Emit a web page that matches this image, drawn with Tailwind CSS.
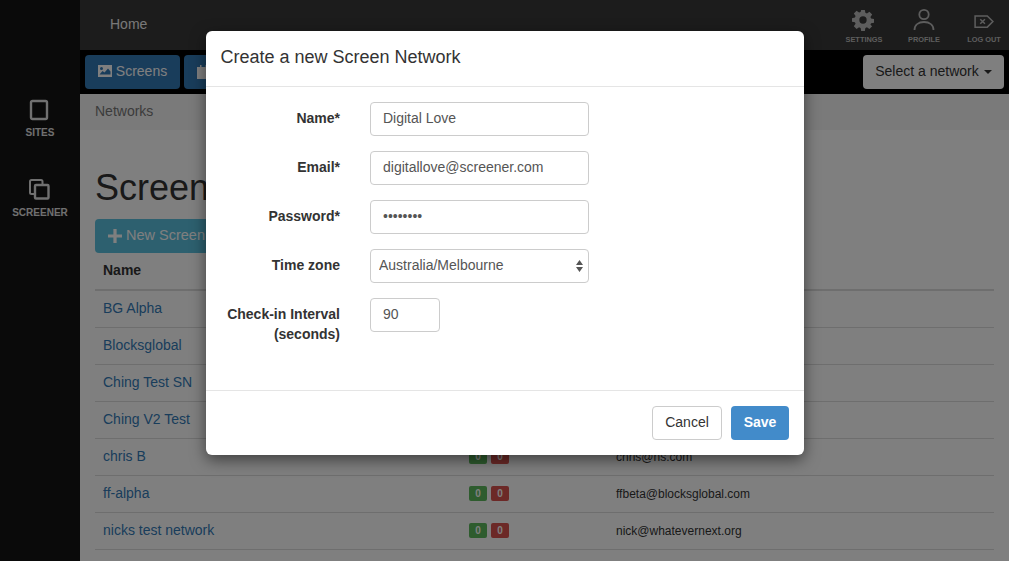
<!DOCTYPE html>
<html lang="en">
<head>
<meta charset="UTF-8">
<title>Create a new Screen Network</title>
<script src="https://cdn.jsdelivr.net/npm/@tailwindcss/browser@4"></script>
</head>
<body class="relative flex h-[561px] overflow-hidden bg-white font-['Liberation_Sans',Arial,sans-serif] text-[14px] text-[#333]">

  <!-- Sidebar -->
  <aside class="w-20 shrink-0 bg-[#141414] pt-[99px] flex flex-col items-center text-[#e0e0e0]">
    <div class="flex flex-col items-center">
      <svg class="-ml-[2px]" width="20" height="22" viewBox="0 0 20 22" fill="none" stroke="currentColor" stroke-width="2.4"><rect x="2" y="2" width="16" height="18" rx="1.5"/></svg>
      <span class="mt-[5px] text-[10px] leading-[14px] font-bold">SITES</span>
    </div>
    <div class="flex flex-col items-center mt-[38px]">
      <svg class="-ml-[2px]" width="22" height="22" viewBox="0 0 22 22" fill="none" stroke="currentColor" stroke-width="2"><path d="M6 16H3.5A1.5 1.5 0 0 1 2 14.500V3.500A1.500 1.500 0 0 1 3.500 2H13a1.500 1.500 0 0 1 1.500 1.500V6"/><rect x="7" y="7" width="13.500" height="13.500" rx="1" stroke-width="2.400"/></svg>
      <span class="mt-[6px] text-[10px] leading-[14px] font-bold">SCREENER</span>
    </div>
  </aside>

  <!-- Main -->
  <div class="flex-1 min-w-0 flex flex-col">
    <header class="h-[50px] bg-[#383838] flex items-center text-[#f0f0f0]">
      <span class="ml-[30px] pb-[2px]">Home</span>
      <div class="ml-auto -mr-[5px] flex items-start h-full text-[#bbb]">
        <div class="w-[60px] flex flex-col items-center pt-[9px]">
          <svg class="-ml-[2px]" width="22" height="22" viewBox="0 0 24 24" fill="currentColor"><path fill-rule="evenodd" d="M10 1h4l.6 3.200 1.700.7L19 3l3 3-1.900 2.700.7 1.700 3.200.6v4l-3.200.6-.7 1.700L22 18.900l-3 3-2.700-1.900-1.700.7-.6 3.300h-4l-.6-3.300-1.700-.7L5 21.900l-3-3 1.900-2.700-.7-1.700L0 14v-4l3.200-.6.7-1.700L2 5l3-3 2.700 1.900 1.700-.7zM12 8a4 4 0 1 0 0 8 4 4 0 0 0 0-8z"/></svg>
          <span class="mt-[4px] text-[7.4px] leading-[10px] font-bold">SETTINGS</span>
        </div>
        <div class="w-[60px] flex flex-col items-center pt-[8px]">
          <svg width="22" height="23" viewBox="0 0 22 23" fill="none" stroke="currentColor" stroke-width="1.800"><circle cx="11" cy="6.500" r="4.700"/><path d="M1.500 22c0-5 4-8 9.500-8s9.500 3 9.500 8"/></svg>
          <span class="mt-[4px] text-[7.4px] leading-[10px] font-bold">PROFILE</span>
        </div>
        <div class="w-[60px] flex flex-col items-center pt-[14px]">
          <svg width="20" height="15" viewBox="0 0 21 16" fill="none" stroke="currentColor" stroke-width="1.600"><path d="M1 2h13l6 6-6 6H1z"/><path d="M6.500 5.500l5 5M11.500 5.500l-5 5"/></svg>
          <span class="mt-[6px] text-[7.4px] leading-[10px] font-bold">LOG OUT</span>
        </div>
      </div>
    </header>

    <nav class="h-[44px] bg-black flex items-center pl-[5px] pr-[5px] gap-1">
      <span class="h-[34px] w-[95px] pb-[2px] rounded-[4px] bg-[#337ab7] text-white flex items-center justify-center gap-[4px]">
        <svg width="14" height="12" viewBox="0 0 14 12" fill="currentColor"><path fill-rule="evenodd" d="M0 0h14v12H0zM1.500 9.500h11V6.500L10 3.500 6.500 7.500 4.500 6zM3.500 2a1.500 1.500 0 1 0 0 3 1.500 1.500 0 0 0 0-3z"/></svg>
        Screens
      </span>
      <span class="h-[34px] w-[95px] rounded-[4px] bg-[#337ab7] text-white flex items-center pl-[13px]">
        <svg width="13" height="14" viewBox="0 0 13 14" fill="currentColor"><path d="M0 2h13v12H0zM3 0h1.500v3H3zM8.500 0H10v3H8.500z"/></svg>
      </span>
      <span class="ml-auto h-[34px] w-[141px] pb-[2px] rounded-[4px] bg-white text-[#333] flex items-center justify-center gap-[5px]">
        Select a network
        <span class="w-0 h-0 mt-[2px] border-x-[4px] border-x-transparent border-t-[4px] border-t-[#333]"></span>
      </span>
    </nav>

    <div class="h-[36px] pb-[2px] bg-[#f5f5f5] flex items-center pl-[15px] text-[#777]">Networks</div>

    <main class="px-[15px]">
      <h1 class="mt-[38px] text-[36px] leading-[40px] text-[#333]">Screen Networks</h1>
      <button class="mt-[11px] h-[34px] w-[180px] pb-[1px] rounded-[4px] bg-[#5bc0de] text-white flex items-center pl-[13px] gap-[4px] text-[14.500px] whitespace-nowrap">
        <svg class="shrink-0" width="14" height="14" viewBox="0 0 13 13" fill="currentColor"><path d="M5 0h3v5h5v3H8v5H5V8H0V5h5z"/></svg>
        New Screen Network
      </button>
      <table class="w-full border-collapse text-left">
        <thead>
          <tr class="h-[37px] border-b-2 border-[#ddd]"><th class="pl-2 pb-[2px] font-bold">Name</th><th class="w-[147px]"></th><th class="w-[378px]"></th></tr>
        </thead>
        <tbody class="text-[#337ab7]">
          <tr class="h-[37px] border-b border-[#ddd]"><td class="pl-2">BG Alpha</td><td></td><td></td></tr>
          <tr class="h-[37px] border-b border-[#ddd]"><td class="pl-2">Blocksglobal</td><td></td><td></td></tr>
          <tr class="h-[37px] border-b border-[#ddd]"><td class="pl-2">Ching Test SN</td><td></td><td></td></tr>
          <tr class="h-[37px] border-b border-[#ddd]"><td class="pl-2">Ching V2 Test</td><td></td><td></td></tr>
          <tr class="h-[37px] border-b border-[#ddd]"><td class="pl-2">chris B</td>
            <td><div class="flex gap-1"><span class="w-[18px] h-[15px] rounded-[2px] bg-[#5cb85c] text-white text-[10px] font-bold leading-[15px] text-center">0</span><span class="w-[18px] h-[15px] rounded-[2px] bg-[#d9534f] text-white text-[10px] font-bold leading-[15px] text-center">0</span></div></td>
            <td class="text-[12px] text-[#333]">chris@ns.com</td></tr>
          <tr class="h-[37px] border-b border-[#ddd]"><td class="pl-2">ff-alpha</td>
            <td><div class="flex gap-1"><span class="w-[18px] h-[15px] rounded-[2px] bg-[#5cb85c] text-white text-[10px] font-bold leading-[15px] text-center">0</span><span class="w-[18px] h-[15px] rounded-[2px] bg-[#d9534f] text-white text-[10px] font-bold leading-[15px] text-center">0</span></div></td>
            <td class="text-[12px] text-[#333]">ffbeta@blocksglobal.com</td></tr>
          <tr class="h-[37px] border-b border-[#ddd]"><td class="pl-2">nicks test network</td>
            <td><div class="flex gap-1"><span class="w-[18px] h-[15px] rounded-[2px] bg-[#5cb85c] text-white text-[10px] font-bold leading-[15px] text-center">0</span><span class="w-[18px] h-[15px] rounded-[2px] bg-[#d9534f] text-white text-[10px] font-bold leading-[15px] text-center">0</span></div></td>
            <td class="text-[12px] text-[#333]">nick@whatevernext.org</td></tr>
        </tbody>
      </table>
    </main>
  </div>

  <!-- Modal backdrop -->
  <div class="absolute inset-0 bg-black/50"></div>

  <!-- Modal -->
  <div class="absolute left-[206px] top-[31px] w-[598px] h-[424px] rounded-[6px] bg-white shadow-[0_5px_15px_rgba(0,0,0,0.5)] flex flex-col">
    <div class="h-[56px] pb-[2px] shrink-0 border-b border-[#e5e5e5] flex items-center pl-[14.500px] text-[18px] text-[#333]">Create a new Screen Network</div>
    <form class="flex-1 pt-[15px] flex flex-col gap-[15px]">
      <div class="flex">
        <label class="w-[134px] text-right font-bold pt-[6px] leading-[20px]">Name*</label>
        <input value="Digital Love" class="ml-[30px] w-[219px] h-[34px] px-3 pb-[2px] border border-[#ccc] rounded-[4px] text-[#555]">
      </div>
      <div class="flex">
        <label class="w-[134px] text-right font-bold pt-[6px] leading-[20px]">Email*</label>
        <input value="digitallove@screener.com" class="ml-[30px] w-[219px] h-[34px] px-3 pb-[2px] border border-[#ccc] rounded-[4px] text-[#555]">
      </div>
      <div class="flex">
        <label class="w-[134px] text-right font-bold pt-[6px] leading-[20px]">Password*</label>
        <input type="password" value="password" class="ml-[30px] w-[219px] h-[34px] px-3 pb-[2px] border border-[#ccc] rounded-[4px] text-[#555]">
      </div>
      <div class="flex">
        <label class="w-[134px] text-right font-bold pt-[6px] leading-[20px]">Time zone</label>
        <div class="relative ml-[30px] w-[219px] h-[34px]">
          <select class="w-full h-full pl-[8px] pb-[2px] border border-[#ccc] rounded-[4px] text-[#555] appearance-none bg-white"><option>Australia/Melbourne</option></select>
          <svg class="absolute right-[6px] top-[11px]" width="7" height="12" viewBox="0 0 7 12" fill="#555"><path d="M3.500 0L7 5H0zM0 7h7l-3.500 5z"/></svg>
        </div>
      </div>
      <div class="flex">
        <label class="w-[134px] text-right font-bold pt-[6px] leading-[20px]">Check-in Interval (seconds)</label>
        <input value="90" class="ml-[30px] w-[70px] h-[34px] px-3 pb-[2px] border border-[#ccc] rounded-[4px] text-[#555]">
      </div>
    </form>
    <div class="h-[65px] shrink-0 border-t border-[#e5e5e5] flex items-center justify-end pr-[15px] gap-[9px]">
      <button class="w-[70px] h-[34px] pb-[2px] border border-[#ccc] rounded-[4px] bg-white text-[#333]">Cancel</button>
      <button class="w-[58px] h-[34px] pb-[2px] rounded-[4px] bg-[#428bca] text-white font-bold">Save</button>
    </div>
  </div>
</body>
</html>
